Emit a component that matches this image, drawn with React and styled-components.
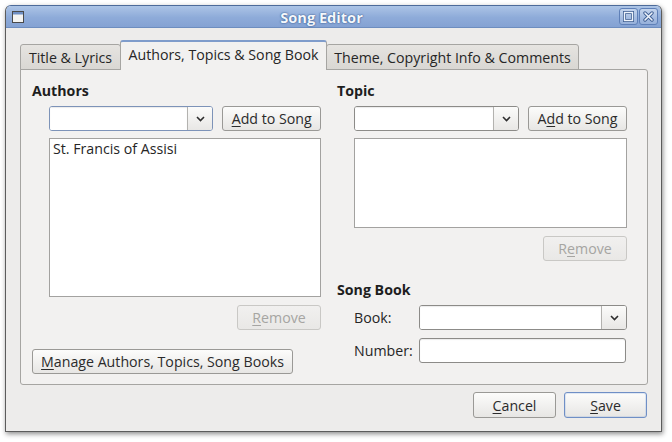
import React from 'react';
import styled, { createGlobalStyle } from 'styled-components';

const Global = createGlobalStyle`
  html, body { margin: 0; padding: 0; background: #ffffff; }
  body {
    font-family: "Open Sans", "DejaVu Sans", sans-serif;
    font-size: 14.2px;
    color: #2b2b2b;
  }
  * { box-sizing: border-box; }
`;

const Screen = styled.div`
  width: 672px;
  height: 442px;
  padding: 5px 0 0 5px;
`;

const Window = styled.div`
  width: 657px;
  height: 427px;
  border: 1px solid #5c5c5c;
  border-top-color: #4d6b9a;
  border-radius: 6px 6px 0 0;
  background: #edeceb;
  box-shadow: 1px 2px 5px rgba(0, 0, 0, 0.45);
  display: flex;
  flex-direction: column;
  overflow: hidden;
`;

const TitleBar = styled.div`
  height: 22px;
  flex: none;
  display: flex;
  align-items: center;
  padding: 0 3px 0 6px;
  background: linear-gradient(#acc4e6, #8eabd9 55%, #84a2d3);
  border-bottom: 1px solid #6d8dbf;
`;

const TitleText = styled.div`
  flex: 1;
  text-align: center;
  font-weight: 700;
  font-size: 14.6px;
  line-height: 18px;
  color: #f4f7fb;
  text-shadow: 0 0 2px #365a90, 0 0 1px #365a90;
`;

const WinButtons = styled.div`
  display: flex;
  gap: 1px;
`;

const WinButton = styled.div`
  width: 19px;
  height: 17px;
  border: 1px solid #5f80b8;
  border-radius: 3px;
  background: linear-gradient(rgba(255,255,255,0.35), rgba(255,255,255,0.12));
  display: flex;
  align-items: center;
  justify-content: center;
`;

const Body = styled.div`
  flex: 1;
  display: flex;
  flex-direction: column;
  padding: 12px 13px 13px 14px;
`;

const TabRow = styled.div`
  display: flex;
  align-items: flex-end;
  height: 30px;
  position: relative;
  z-index: 1;
  margin-bottom: -1px;
`;

const Tab = styled.div`
  width: ${p => p.$w}px;
  height: ${p => (p.$active ? 30 : 26)}px;
  display: flex;
  align-items: center;
  justify-content: center;
  white-space: nowrap;
  color: #262626;
  border: 1px solid #a6a5a2;
  border-bottom: ${p => (p.$active ? 'none' : '1px solid #a6a5a2')};
  border-top: ${p => (p.$active ? '2px solid #7f9ccb' : '1px solid #a6a5a2')};
  border-radius: 3px 3px 0 0;
  background: ${p => (p.$active ? '#f2f1f0' : 'linear-gradient(#e6e4e1, #d9d7d3)')};
  margin-left: ${p => (p.$first ? 0 : -1)}px;
  padding-bottom: ${p => (p.$active ? 4 : 0)}px;
`;

const Panel = styled.div`
  height: 316px;
  flex: none;
  border: 1px solid #a6a5a2;
  border-radius: 0 3px 3px 3px;
  background: #f2f1f0;
  display: grid;
  grid-template-columns: 289px 290px;
  column-gap: 16px;
  padding: 12px 0 0 11px;
`;

const Column = styled.div`
  display: flex;
  flex-direction: column;
`;

const GroupTitle = styled.div`
  font-weight: 700;
  font-size: 14.2px;
  line-height: 17px;
  color: #1e1e1e;
  margin-top: ${p => p.$mt || 0}px;
`;

const GroupBody = styled.div`
  display: flex;
  flex-direction: column;
  padding-left: 17px;
  gap: ${p => p.$gap || 7}px;
  margin-top: 7px;
`;

const Row = styled.div`
  display: flex;
  gap: 9px;
`;

const Combo = styled.div`
  width: ${p => p.$w}px;
  height: 25px;
  display: flex;
  border: 1px solid ${p => (p.$focus ? '#7d93b8' : '#8c8b88')};
  border-radius: 3px;
  background: #fff;
  overflow: hidden;
`;

const ComboField = styled.div`
  flex: 1;
  background: #ffffff;
  box-shadow: inset 0 1px 1px rgba(0,0,0,0.08);
`;

const ComboArrow = styled.div`
  width: 25px;
  border-left: 1px solid #b3b2af;
  background: linear-gradient(#fbfbfa, #e8e7e5);
  display: flex;
  align-items: center;
  justify-content: center;
`;

const Button = styled.button`
  font-family: inherit;
  font-size: 14.2px;
  height: ${p => p.$h || 25}px;
  width: ${p => (p.$w ? `${p.$w}px` : 'auto')};
  padding: 0 6px;
  border: 1px solid ${p => (p.$default ? '#6f8fc6' : p.disabled ? '#c9c8c5' : '#9a9996')};
  border-radius: 3px;
  background: ${p => (p.disabled ? 'linear-gradient(#f1f0ef, #e9e8e6)' : 'linear-gradient(#fcfcfb, #e7e6e4)')};
  color: ${p => (p.disabled ? '#a6a5a2' : '#2b2b2b')};
  display: flex;
  align-items: center;
  justify-content: center;
  white-space: nowrap;
  align-self: ${p => (p.$right ? 'flex-end' : 'auto')};
  margin-top: ${p => p.$mt || 0}px;
  cursor: default;
  box-shadow: ${p => (p.$default ? 'inset 0 0 0 1px rgba(140,170,220,0.25)' : 'none')};
`;

const Mn = styled.span`
  text-decoration: underline;
  text-underline-offset: 2px;
`;

const ListBox = styled.div`
  height: ${p => p.$h}px;
  background: #ffffff;
  border: 1px solid #a3a2a0;
  padding: 0 3px;
  line-height: 20px;
  color: #262626;
`;

const ManageButton = styled(Button)`
  align-self: flex-start;
  margin-top: 19px;
  width: 261px;
`;

const FormRow = styled.div`
  display: flex;
  align-items: center;
`;

const FormLabel = styled.div`
  width: 65px;
  color: #262626;
`;

const TextInput = styled.div`
  width: 207px;
  height: 25px;
  border: 1px solid #8c8b88;
  border-radius: 3px;
  background: #ffffff;
  box-shadow: inset 0 1px 1px rgba(0,0,0,0.08);
`;

const Footer = styled.div`
  display: flex;
  justify-content: flex-end;
  gap: 8px;
  margin-top: 7px;
  padding-right: 1px;
`;

const Chevron = () => (
  <svg width="9" height="6" viewBox="0 0 9 6">
    <path d="M1 1 L4.5 4.5 L8 1" fill="none" stroke="#2e2e2e" strokeWidth="1.6" />
  </svg>
);

const WindowIcon = () => (
  <svg width="12" height="12" viewBox="0 0 12 12">
    <rect x="0.5" y="0.5" width="11" height="11" fill="#f4f4f2" stroke="#4a4a4a" />
    <rect x="1" y="1" width="10" height="2.5" fill="#6f8fc4" />
  </svg>
);

const MaxGlyph = () => (
  <svg width="11" height="11" viewBox="0 0 11 11">
    <rect x="1.5" y="1.5" width="8" height="8" fill="none" stroke="#3f5f93" strokeWidth="3" />
    <rect x="1.5" y="1.5" width="8" height="8" fill="none" stroke="#eef3fb" strokeWidth="1.4" />
  </svg>
);

const CloseGlyph = () => (
  <svg width="11" height="11" viewBox="0 0 11 11">
    <path d="M2 2 L9 9 M9 2 L2 9" stroke="#3f5f93" strokeWidth="3.4" strokeLinecap="round" />
    <path d="M2 2 L9 9 M9 2 L2 9" stroke="#eef3fb" strokeWidth="1.6" strokeLinecap="round" />
  </svg>
);

const ComboBox = ({ w, focus }) => (
  <Combo $w={w} $focus={focus}>
    <ComboField />
    <ComboArrow><Chevron /></ComboArrow>
  </Combo>
);

export default function App() {
  return (
    <>
      <Global />
      <Screen>
        <Window>
          <TitleBar>
            <WindowIcon />
            <TitleText>Song Editor</TitleText>
            <WinButtons>
              <WinButton><MaxGlyph /></WinButton>
              <WinButton><CloseGlyph /></WinButton>
            </WinButtons>
          </TitleBar>
          <Body>
            <TabRow>
              <Tab $w={101} $first>Title &amp; Lyrics</Tab>
              <Tab $w={207} $active>Authors, Topics &amp; Song Book</Tab>
              <Tab $w={253}>Theme, Copyright Info &amp; Comments</Tab>
            </TabRow>
            <Panel>
              <Column>
                <GroupTitle>Authors</GroupTitle>
                <GroupBody>
                  <Row>
                    <ComboBox w={165} focus />
                    <Button $w={99}><Mn>A</Mn>dd to Song</Button>
                  </Row>
                  <ListBox $h={159}>St. Francis of Assisi</ListBox>
                  <Button $w={84} $right $mt={1} disabled><Mn>R</Mn>emove</Button>
                </GroupBody>
                <ManageButton><Mn>M</Mn>anage Authors, Topics, Song Books</ManageButton>
              </Column>
              <Column>
                <GroupTitle>Topic</GroupTitle>
                <GroupBody>
                  <Row>
                    <ComboBox w={165} />
                    <Button $w={99}>A<Mn>d</Mn>d to Song</Button>
                  </Row>
                  <ListBox $h={90} />
                  <Button $w={84} $right $mt={1} disabled>R<Mn>e</Mn>move</Button>
                </GroupBody>
                <GroupTitle $mt={20}>Song Book</GroupTitle>
                <GroupBody $gap={8}>
                  <FormRow>
                    <FormLabel>Book:</FormLabel>
                    <ComboBox w={208} />
                  </FormRow>
                  <FormRow>
                    <FormLabel>Number:</FormLabel>
                    <TextInput />
                  </FormRow>
                </GroupBody>
              </Column>
            </Panel>
            <Footer>
              <Button $w={83} $h={26}><Mn>C</Mn>ancel</Button>
              <Button $w={83} $h={26} $default><Mn>S</Mn>ave</Button>
            </Footer>
          </Body>
        </Window>
      </Screen>
    </>
  );
}
